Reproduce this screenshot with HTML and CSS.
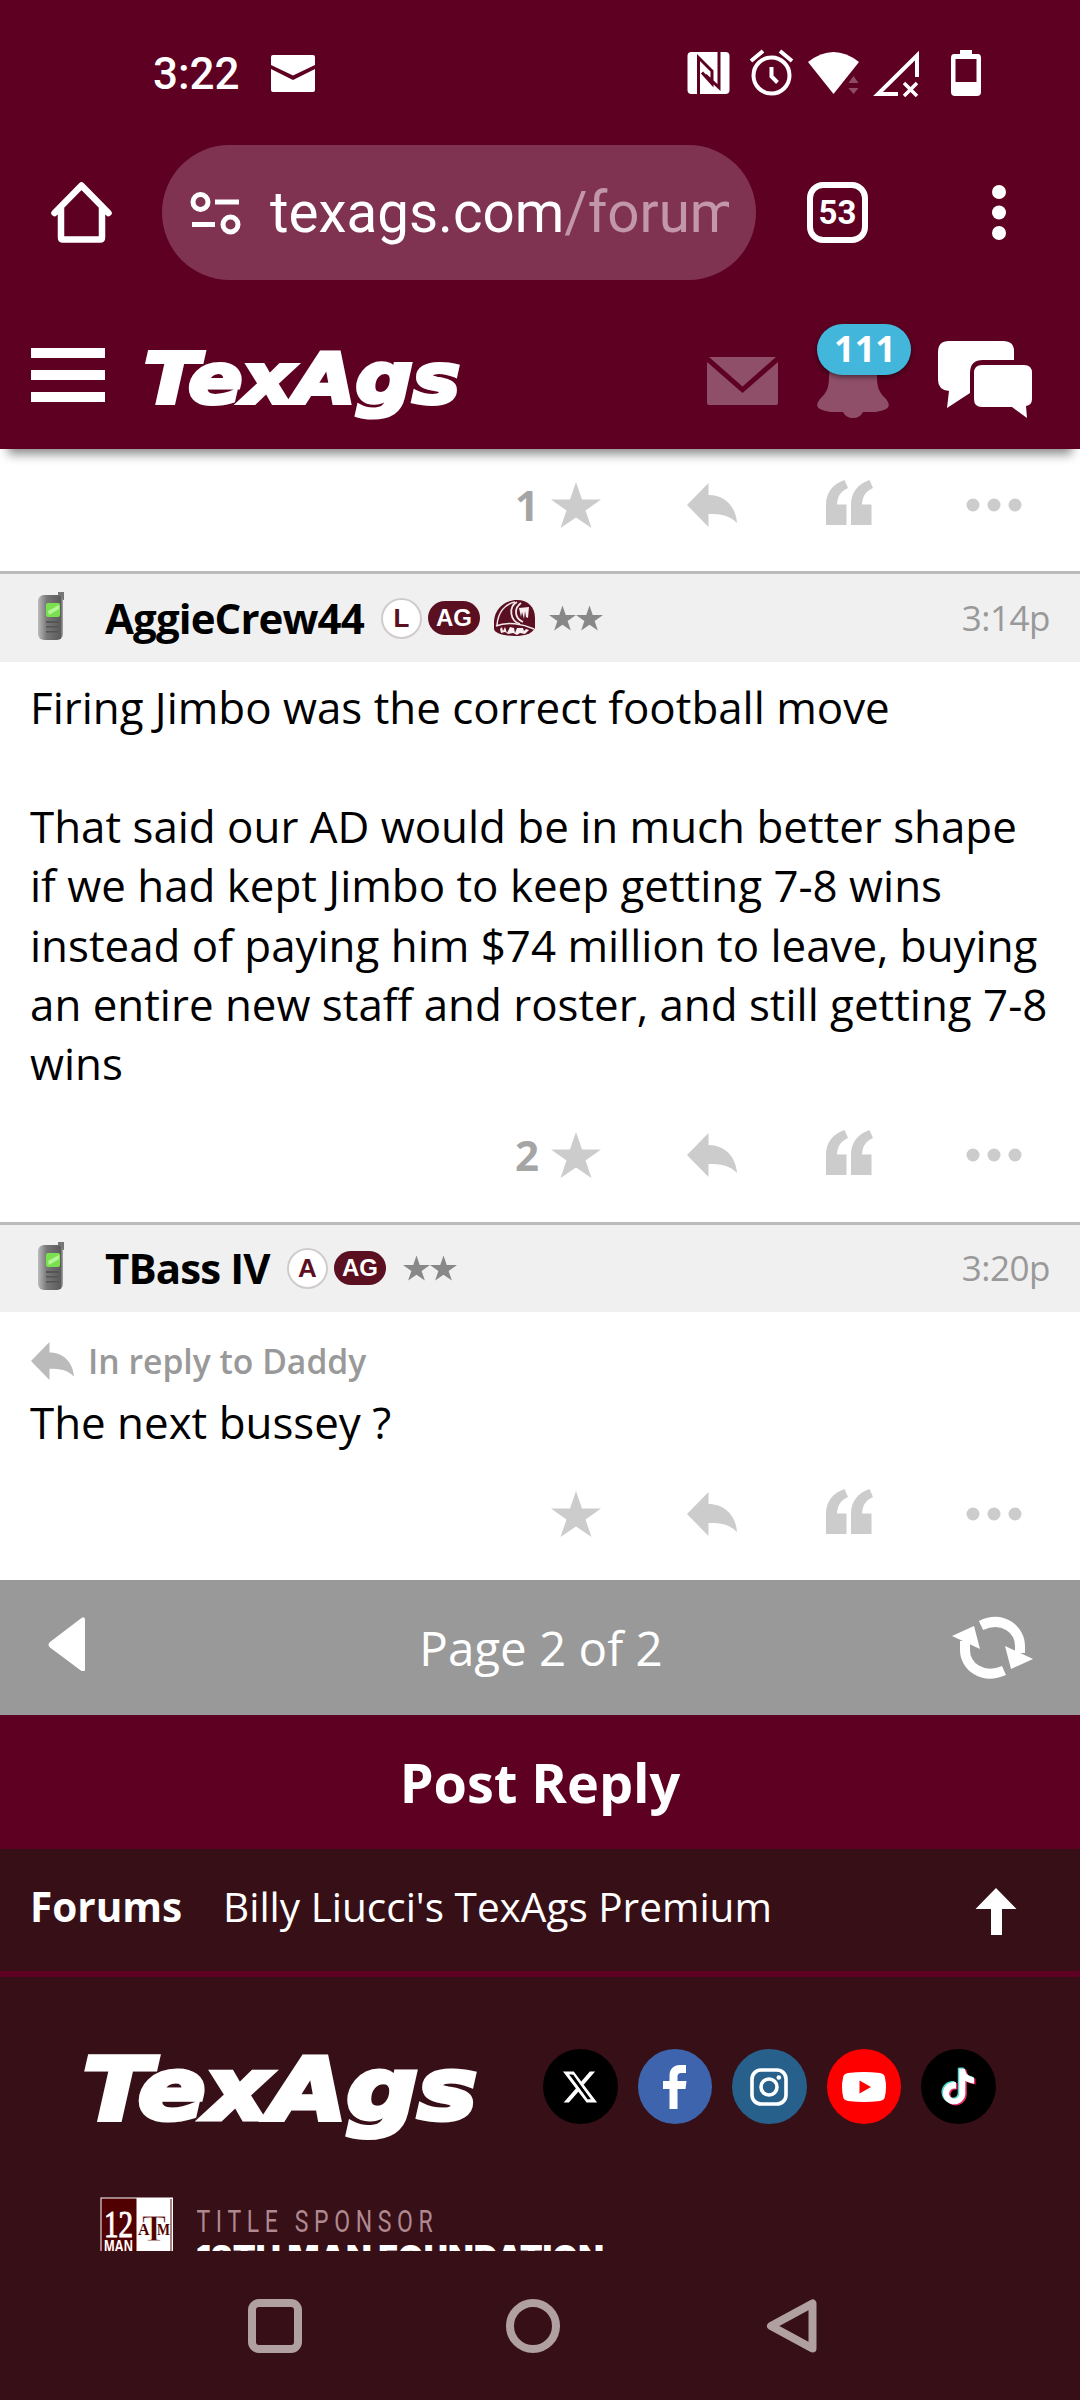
FILE: index.html
```html
<!DOCTYPE html>
<html lang="en">
<head>
<meta charset="utf-8">
<title>TexAgs Forums</title>
<link rel="stylesheet" href="styles.css">
</head>
<body>
<svg class="defs" aria-hidden="true">
  <symbol id="star" viewBox="0 0 50 46"><path d="M25 0L31 17.500H50L34.500 28.500L40.500 46L25 35.500L9.500 46L15.500 28.500L0 17.500H19Z"/></symbol>
  <symbol id="reply" viewBox="0 0 50 44"><path d="M0 22L21.500 0V12C38 12 49 24 50 40C42 32 34 31 21.500 31V44Z"/></symbol>
  <symbol id="quote" viewBox="0 0 47 45"><path d="M0 45V25C0 12 7 4 18.500 0L22 8C15 11 11.500 16 11 24.500H20.500V45ZM25 45V25C25 12 32 4 43.500 0L47 8C40 11 36.500 16 36 24.500H45.500V45Z"/></symbol>
  <symbol id="dots" viewBox="0 0 56 14"><circle cx="7" cy="7" r="6.500"/><circle cx="28" cy="7" r="6.500"/><circle cx="49" cy="7" r="6.500"/></symbol>
  <symbol id="phone" viewBox="0 0 28 50">
    <path d="M21 1h6v8h-6z" fill="#777"/>
    <rect x="1" y="4" width="25" height="45" rx="6" fill="url(#phonebody)"/>
    <rect x="9" y="12" width="14" height="14" rx="2" fill="#7be04f"/>
    <path d="M11 20l11-6v4l-10 6z" fill="#b5f59a"/>
    <path d="M9 30h13v2H9zM9 35h13v1.500H9zM9 40h13v1.500H9z" fill="#555"/>
  </symbol>
  <linearGradient id="phonebody"><stop offset="0" stop-color="#bbb"/><stop offset=".35" stop-color="#777"/><stop offset=".9" stop-color="#5c5c5c"/><stop offset="1" stop-color="#aaa"/></linearGradient>
</svg>

<div class="status">
  <span class="clock">3:22</span>
  <svg class="s-mail" viewBox="271 54 44 37" width="44" height="37"><path fill="#fff" d="M273 54h40q2 0 2 2v8l-22 10.500L271 64v-8q0-2 2-2zM271 68l22 11 22-11v21q0 2-2 2h-40q-2 0-2-2z"/></svg>
  <svg class="s-nfc" viewBox="687 51 43 44" width="43" height="44"><rect x="687.500" y="52" width="42" height="42" rx="4" fill="#fff"/><path d="M698.500 95V57.500L712 71V83.500L702 72.500M719 51V87.500L705.500 75" fill="none" stroke="#5e0022" stroke-width="3"/></svg>
  <svg class="s-alarm" viewBox="749 49 45 48" width="45" height="48" fill="none" stroke="#fff" stroke-width="4"><circle cx="771.500" cy="75.500" r="18"/><path d="M751 61l12-10M792 61l-12-10M771.500 67v9.500l6 6"/></svg>
  <svg class="s-wifi" viewBox="808 50 52 44" width="52" height="44"><path fill="#fff" d="M808 61Q833.500 41 859 61L833.500 93Z"/><path fill="#8e4d67" d="M853.500 75l5 7h-10zM853.500 93l5-6h-10z"/></svg>
  <svg class="s-signal" viewBox="872 49 48 47" width="48" height="47" fill="none" stroke="#fff" stroke-width="4"><path d="M898 93H878L917 54.500V76"/><path d="M904 82l13 13M917 82l-13 13" stroke-width="3.500"/></svg>
  <svg class="s-bat" viewBox="950 48 32 48" width="32" height="48"><path fill="#fff" fill-rule="evenodd" d="M960 49h12v4h6q3 0 3 4v34q0 4-4 4h-22q-4 0-4-4V57q0-4 3-4h6zM955.500 58v23H976.500V58z"/></svg>
</div>

<div class="toolbar">
  <svg class="home" viewBox="50 181 64 63" width="64" height="63" fill="none" stroke="#fff" stroke-width="6.500" stroke-linejoin="round" stroke-linecap="round"><path d="M54.500 213L81.500 185.500L108.500 213M61 208V237.500q0 2 2 2H100q2 0 2-2V208"/></svg>
  <div class="pill">
    <svg viewBox="190 190 52 44" width="52" height="44" fill="none" stroke="#fff" stroke-width="5"><circle cx="200.500" cy="201" r="7.500"/><circle cx="230.500" cy="223.500" r="7.500"/><path d="M215 201h24M192 223.500h23"/></svg>
    <div class="url">texags.com<span>/forums</span></div>
  </div>
  <div class="tabs">53</div>
  <svg class="kebab" viewBox="990 183 18 60" width="18" height="60" fill="#fff"><circle cx="999" cy="192" r="7"/><circle cx="999" cy="212.500" r="7"/><circle cx="999" cy="233" r="7"/></svg>
</div>

<header class="site">
  <svg class="burger" viewBox="31 348 74 54" width="74" height="54" fill="#fff"><path d="M31 348h74v10H31zM31 370h74v10H31zM31 392h74v10H31z"/></svg>
  <svg class="logo" viewBox="140 340 330 84" width="330" height="84"><text class="logotype" x="144" y="403" textLength="316" lengthAdjust="spacingAndGlyphs">TexAgs</text></svg>
  <svg class="h-mail" viewBox="707 357 71 48" width="71" height="48" fill="#8f4f69"><path d="M709 357h67L742.500 386.500ZM707 362L742.500 393L778 362V403q0 2-2 2H709q-2 0-2-2z"/></svg>
  <div class="alerts">
    <svg viewBox="816 360 75 60" width="75" height="60" fill="#8f4f69"><path d="M853 360c-16 0-24 6-24 16 0 12-2 16-9 23-6 8-2 11 10 13h13q3 6 10 6t10-6h13c12-2 16-5 10-13-7-7-9-11-9-23 0-10-8-16-24-16z"/></svg>
    <span class="badge">111</span>
  </div>
  <svg class="chat" viewBox="938 340 95 79" width="95" height="79" fill="#fff"><path d="M949 341h54q11 0 11 10v9H983q-13 0-13 13v20l-23 15 2-17q-11-1-11-11V352q0-11 11-11zM982 365h42q8 0 8 8v26q0 6-6 7l1 12-15-11H982q-8 0-8-8V373q0-8 8-8z"/></svg>
</header>

<main>
  <div class="actions first">
    <b>1</b><svg class="a-star"><use href="#star"/></svg><svg class="a-reply"><use href="#reply"/></svg><svg class="a-quote"><use href="#quote"/></svg><svg class="a-dots"><use href="#dots"/></svg>
  </div>

  <article>
    <div class="posthead tall">
      <svg class="phone"><use href="#phone"/></svg>
      <span class="name n1">AggieCrew44</span>
      <span class="letter">L</span><span class="ag">AG</span>
      <svg class="ring" viewBox="0 0 43 38" width="43" height="38"><path fill="#5a1020" d="M1 22C2 9 13 1 24 1c11 0 18 7 18 18v10c-3 6-11 8-20 8S2 35 1 30z"/><path fill="none" stroke="#f3e8ea" stroke-width="1.500" d="M4 26C5 13 12 5 22 3M3 27C14 22 30 25 41 30"/><path fill="none" stroke="#f3e8ea" stroke-width="1.800" d="M24 3C15 8 17 22 27 25M28 4C21 9 21 19 30 23"/><path fill="#f6eef0" d="M26 9l10-1-1 11-2-1-1-6-1 8-2-7-1 5zM7 30l2-2 1 4 2-4 2 6 3-6 4 1 1 5 2-5h6l1 3 2-2 3 1-4 4-5-1-3 2-4-2-5 1-3-2-4 1z"/></svg>
      <svg class="mini"><use href="#star"/></svg><svg class="mini"><use href="#star"/></svg>
      <time>3:14p</time>
    </div>
    <div class="body">Firing Jimbo was the correct football move<br><br>That said our AD would be in much better shape<br>if we had kept Jimbo to keep getting 7-8 wins<br>instead of paying him $74 million to leave, buying<br>an entire new staff and roster, and still getting 7-8<br>wins</div>
    <div class="actions">
      <b>2</b><svg class="a-star"><use href="#star"/></svg><svg class="a-reply"><use href="#reply"/></svg><svg class="a-quote"><use href="#quote"/></svg><svg class="a-dots"><use href="#dots"/></svg>
    </div>
  </article>

  <article>
    <div class="posthead">
      <svg class="phone"><use href="#phone"/></svg>
      <span class="name n2">TBass IV</span>
      <span class="letter">A</span><span class="ag">AG</span>
      <span class="nogap"></span>
      <svg class="mini"><use href="#star"/></svg><svg class="mini"><use href="#star"/></svg>
      <time>3:20p</time>
    </div>
    <div class="inreply"><svg><use href="#reply"/></svg>In reply to Daddy</div>
    <div class="body short">The next bussey ?</div>
    <div class="actions">
      <b></b><svg class="a-star"><use href="#star"/></svg><svg class="a-reply"><use href="#reply"/></svg><svg class="a-quote"><use href="#quote"/></svg><svg class="a-dots"><use href="#dots"/></svg>
    </div>
  </article>
</main>

<div class="pager">
  <svg class="prev" viewBox="48 1617 38 54" width="38" height="54" fill="#fff"><path d="M81.500 1618Q85 1616 85 1620V1669Q85 1673 81.500 1671L50 1647.500Q47 1645 50 1642Z"/></svg>
  <span>Page 2 of 2</span>
  <svg class="refresh" viewBox="952 1616 82 63" width="82" height="63"><path fill="none" stroke="#fff" stroke-width="10" d="M981 1625.500C1003 1615 1020 1630 1020 1646V1653M1004 1670.500C982 1680 965 1666 965 1650V1641"/><path fill="#fff" d="M1005 1646l28 13-22 10zM980 1649l-28-13 22-10z"/></svg>
</div>
<div class="postreply">Post Reply</div>
<nav class="crumbs">
  <b>Forums</b><span>Billy Liucci's TexAgs Premium</span>
  <svg viewBox="975 1886 42 48" width="42" height="48" fill="#fff"><path d="M996 1887l20.500 21H1002v26h-11v-26H975.500z"/></svg>
</nav>

<footer>
  <div class="brand">
    <svg class="flogo" viewBox="80 2040 410 104" width="410" height="104"><text class="logotype big" x="83" y="2118.500" textLength="394" lengthAdjust="spacingAndGlyphs">TexAgs</text></svg>
    <div class="social">
      <span class="x"><svg viewBox="0 0 24 24" width="38" height="38"><path fill="#fff" d="M18.244 2.250h3.308l-7.227 8.260 8.502 11.240H16.170l-5.214-6.817L4.990 21.750H1.680l7.730-8.835L1.254 2.250H8.080l4.713 6.231zm-1.161 17.520h1.833L7.084 4.126H5.117z"/><path stroke="#000" stroke-width="1.600" d="M7 4.500L17.500 19.500"/></svg></span>
      <span class="fb"><svg viewBox="663 2065 24 44" width="24" height="44"><path fill="#fff" d="M669.500 2109v-20H663v-8h6.500v-5c0-7 4-11 10.500-11h6v8h-4c-3.500 0-4.500 1.500-4.500 4v4h9l-1 8h-8v20z"/></svg></span>
      <span class="ig"><svg viewBox="0 0 38 38" width="38" height="38" fill="none" stroke="#fff" stroke-width="3.600"><rect x="2" y="2" width="34" height="34" rx="9"/><circle cx="19" cy="19" r="8"/><circle cx="28.800" cy="9.500" r="2.300" fill="#fff" stroke="none"/></svg></span>
      <span class="yt"><svg viewBox="0 0 44 30" width="44" height="30"><path fill="#fff" d="M6 1Q22-1 38 1q5 1 5 5 2 9 0 18 0 4-5 5-16 2-32 0-5-1-5-5-2-9 0-18 0-4 5-5z"/><path fill="#f00" d="M17.500 8.500L29 15l-11.500 6.500z"/></svg></span>
      <span class="tt"><svg viewBox="-1 -1 26 26" width="43" height="43"><defs><path id="note" d="M12.525.020c1.310-.020 2.610-.010 3.910-.020.080 1.530.630 3.090 1.750 4.170 1.120 1.110 2.700 1.620 4.240 1.790v4.030c-1.440-.050-2.890-.350-4.200-.970-.570-.260-1.100-.590-1.620-.930-.010 2.920.010 5.840-.020 8.750-.080 1.400-.540 2.790-1.350 3.940-1.310 1.920-3.580 3.170-5.910 3.210-1.430.080-2.860-.310-4.080-1.030-2.020-1.190-3.440-3.370-3.650-5.710-.020-.500-.030-1-.010-1.490.180-1.900 1.120-3.720 2.580-4.960 1.660-1.440 3.980-2.130 6.150-1.720.020 1.480-.040 2.960-.040 4.440-.990-.320-2.150-.230-3.020.370-.630.410-1.110 1.040-1.360 1.750-.210.510-.150 1.070-.140 1.610.240 1.640 1.820 3.020 3.500 2.870 1.120-.010 2.190-.660 2.770-1.610.190-.330.400-.670.410-1.060.100-1.790.060-3.570.070-5.360.010-4.030-.010-8.050.020-12.070z"/></defs><g transform="translate(1.200 1.200) scale(.9)"><use href="#note" x="-1" y="-.7" fill="#4fd5cc"/><use href="#note" x="1" y=".7" fill="#e8285f"/><use href="#note" fill="#fff"/></g></svg></span>
    </div>
  </div>
  <div class="sponsor">
    <svg viewBox="100 2197 74 54" width="74" height="54">
      <rect x="100.500" y="2197.500" width="72.500" height="70" fill="#fff"/><rect x="101.500" y="2198.500" width="35" height="70" fill="#500000"/>
      <path d="M171 2199v60" stroke="#500000" stroke-width="1"/>
      <text class="tw" x="104" y="2237" textLength="29" lengthAdjust="spacingAndGlyphs">12</text>
      <text class="man" x="104" y="2252" textLength="29" lengthAdjust="spacingAndGlyphs">MAN</text>
      <text class="am" x="138" y="2235">A</text><text class="am" x="157" y="2235" textLength="13" lengthAdjust="spacingAndGlyphs">M</text>
      <text class="t" x="142" y="2241" textLength="24" lengthAdjust="spacingAndGlyphs">T</text>
    </svg>
    <svg class="stext" viewBox="195 2197 420 54" width="420" height="54">
      <text class="title" transform="translate(196.500 2232) scale(.72 1)" textLength="328">TITLE SPONSOR</text>
      <text class="found" x="196" y="2270" textLength="408" lengthAdjust="spacingAndGlyphs">12TH MAN FOUNDATION</text>
    </svg>
  </div>
</footer>

<div class="sysnav">
  <svg viewBox="248 2299 570 54" width="570" height="54" fill="none" stroke="#b0a0a2" stroke-width="8" stroke-linejoin="round"><rect x="252" y="2303" width="46" height="46" rx="7"/><circle cx="533" cy="2326" r="23"/><path d="M812.500 2303.500V2348.500L771 2326Z"/></svg>
</div>
</body>
</html>
```
FILE: styles.css
```css
* { box-sizing: border-box; }
body { margin: 0; width: 1080px; height: 2400px; overflow: hidden; background: #fff; font-family: "Open Sans", sans-serif; color: #000; }
svg { display: block; flex: none; }
.defs { position: absolute; width: 0; height: 0; }

.status { height: 146px; background: #5e0022; display: flex; align-items: center; padding-left: 153px; color: #fff; }
.clock { font: 500 44px/52px Roboto, sans-serif; width: 118px; padding-top: 1px; }
.s-nfc { margin-left: 372px; }
.s-alarm { margin-left: 19px; }
.s-wifi { margin-left: 14px; }
.s-signal { margin-left: 12px; }
.s-bat { margin-left: 30px; }

.toolbar { height: 165px; padding: 0 0 32px 50px; background: #5e0022; display: flex; align-items: center; }
.pill { margin-left: 48px; width: 594px; height: 135px; border-radius: 68px; background: #7f3351; display: flex; align-items: center; padding-left: 28px; }
.url { margin-left: 28px; width: 459px; height: 74px; overflow: hidden; white-space: nowrap; font: 400 56.500px/74px Roboto, sans-serif; color: #fff; }
.url span { color: #c397aa; }
.tabs { margin-left: 51px; width: 61px; height: 61px; border: 6.500px solid #fff; border-radius: 16px; font: 700 33px/49px Roboto, sans-serif; text-align: center; color: #fff; }
.kebab { margin-left: 122px; }

.site { height: 138px; background: #5e0022; display: flex; align-items: flex-start; padding-left: 31px; position: relative; z-index: 1; box-shadow: 0 13px 10px -8px #888; }
.burger { margin-top: 37px; }
.logo { margin: 29px 0 0 35px; overflow: visible; }
.flogo { overflow: visible; }
.logotype { font: italic 700 69px "DejaVu Sans", sans-serif; fill: #fff; stroke: #fff; stroke-width: 4px; }
.big { font-size: 86px; stroke-width: 5px; }
.h-mail { margin: 46px 0 0 237px; }
.alerts { position: relative; width: 95px; height: 108px; margin-left: 38px; padding-top: 49px; }
.badge { position: absolute; left: 1px; top: 13px; width: 94px; height: 51px; padding-left: 2px; border-radius: 26px; background: #43b6db; color: #fff; font-weight: 700; font-size: 36px; line-height: 49px; text-align: center; box-shadow: 0 2px 5px rgba(0,0,0,.5); }
.chat { margin: 29px 0 0 27px; }

.actions { display: flex; align-items: center; height: 128px; padding-bottom: 5px; color: #a5a5a5; fill: #ccc; }
.first { height: 122px; padding-bottom: 11px; }
.actions b { width: 551px; padding-right: 12px; text-align: right; font-size: 42px; line-height: 50px; }
.a-star { width: 50px; height: 46px; }
.a-reply { width: 50px; height: 44px; margin-left: 86px; }
.a-quote { width: 47px; height: 45px; margin: -5px 0 0 89px; }
.a-dots { width: 56px; height: 14px; margin-left: 93px; }

.posthead { height: 90px; border-top: 3px solid #bbb; background: #f0f0f0; display: flex; align-items: center; padding: 0 30px 0 37px; }
.tall { height: 91px; }
.phone { width: 28px; height: 50px; margin-top: -5px; }
.name { font-weight: 700; font-size: 42px; line-height: 60px; letter-spacing: -.9px; margin-left: 40px; white-space: nowrap; }
.n1 { width: 276px; }
.n2 { width: 182px; }
.letter { width: 41px; height: 41px; border: 2px solid #d0cccc; border-radius: 50%; background: #fff; color: #5a1020; font: 700 26px/37px "Liberation Sans", sans-serif; text-align: center; }
.ag { margin: 0 13px 0 6px; width: 52px; height: 34px; border-radius: 17px; background: #5a1020; color: #fff; font: 700 24px/34px "Liberation Sans", sans-serif; text-align: center; }
.ring { margin-right: 13px; }
.nogap { width: 4px; }
.mini { width: 27px; height: 26px; fill: #888; }
.posthead time { margin-left: auto; font-size: 35px; line-height: 48px; letter-spacing: -.5px; color: #999; }
.body { padding: 16px 31px 0 30px; font-size: 43.880px; line-height: 59.400px; white-space: nowrap; }
.inreply { display: flex; align-items: center; height: 61px; margin-top: 19px; padding-left: 31px; font-weight: 600; font-size: 33.700px; line-height: 46px; color: #999; }
.inreply svg { width: 43px; height: 38px; margin-right: 14px; fill: #bbb; }
.short { padding-top: 1px; }

.pager { height: 135px; background: #999; color: #fff; display: flex; align-items: center; justify-content: space-between; padding: 0 46px 0 48px; font-size: 47.500px; line-height: 66px; }
.prev { margin: -8px 44px 0 0; }
.postreply { height: 134px; background: #5e0022; color: #fff; font-weight: 700; font-size: 54px; line-height: 134px; text-align: center; }
.crumbs { height: 128px; background: #370f17; border-bottom: 6px solid #5e0022; color: #fff; font-size: 40.500px; line-height: 56px; display: flex; align-items: center; padding: 0 63px 6px 30px; }
.crumbs b { width: 193px; }
.crumbs svg { margin: 8px 0 0 auto; }

footer { height: 274px; background: #370f17; }
.brand { display: flex; align-items: flex-start; padding: 63px 0 0 80px; }
.social { display: flex; gap: 20px; margin: 9px 0 0 53px; }
.social span { width: 74.500px; height: 75px; border-radius: 50%; display: flex; align-items: center; justify-content: center; }
.x, .tt { background: #000; }
.fb { background: #3d64ad; }
.ig { background: #27608b; }
.yt { background: #f00; }
.sponsor { display: flex; padding: 53px 0 0 100px; height: 107px; overflow: hidden; }
.stext { margin-left: 21px; overflow: hidden; }
.title { font: 400 32px Roboto, sans-serif; fill: #b08990; }
.found { font: 900 34px Inter, sans-serif; fill: #fff; }
.tw { font: 400 38px "Liberation Serif", serif; fill: #fff; stroke: #fff; }
.man { font: 700 17px "Liberation Sans", sans-serif; fill: #fff; }
.am { font: 700 16px "Liberation Serif", serif; fill: #500000; }
.t { font: 700 37px "Liberation Serif", serif; fill: #500000; stroke: #fff; stroke-width: .800px; }
.sysnav { height: 150px; background: #370f17; padding: 48px 0 0 248px; }
```
